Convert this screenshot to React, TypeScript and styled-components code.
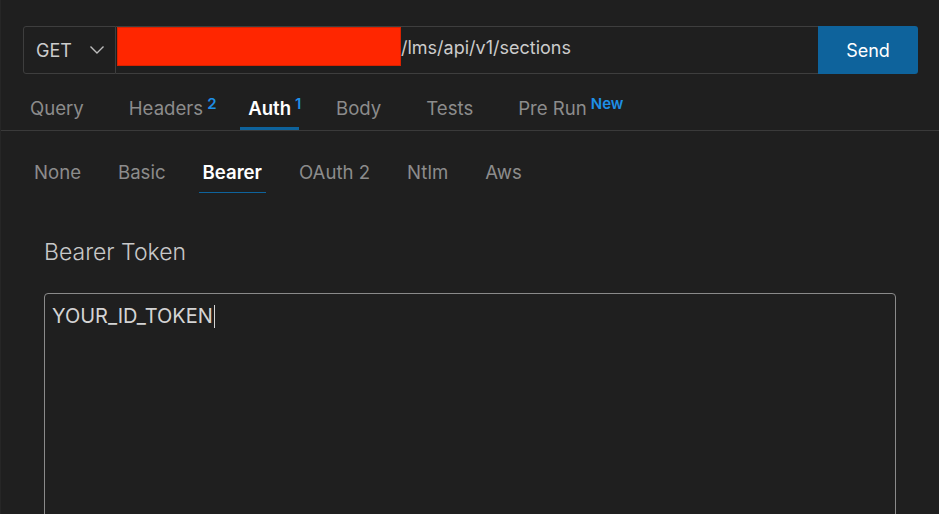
import React from "react";
import styled, { createGlobalStyle } from "styled-components";

const Global = createGlobalStyle`
  html, body { margin: 0; padding: 0; background: #1f1f1f; }
  body { font-family: Inter, "Noto Sans", "Liberation Sans", sans-serif; }
  * { box-sizing: border-box; }
`;

const Page = styled.div`
  width: 939px;
  height: 514px;
  overflow: hidden;
  background: #1f1f1f;
  border-left: 1px solid #262626;
  padding-top: 26px;
  color: #cccccc;
`;

const RequestBar = styled.div`
  display: flex;
  height: 48px;
  margin: 0 21px 0 22px;
`;

const MethodSelect = styled.div`
  width: 93px;
  display: flex;
  align-items: center;
  justify-content: space-between;
  padding: 0 10px 0 12px;
  border: 1px solid #3e3e3e;
  border-radius: 3px 0 0 3px;
  font-size: 18px;
  color: #cccccc;
`;

const UrlField = styled.div`
  flex: 1;
  display: flex;
  align-items: flex-start;
  border-top: 1px solid #3e3e3e;
  border-bottom: 1px solid #3e3e3e;
  padding: 0 0 0 1px;
`;

const Redaction = styled.div`
  width: 284px;
  height: 39px;
  background: #ff2600;
  border: 1px solid #d92200;
`;

const UrlText = styled.span`
  font-size: 18px;
  line-height: 42px;
  color: #cccccc;
`;

const SendButton = styled.button`
  width: 100px;
  border: none;
  border-radius: 0 3px 3px 0;
  background: #0e639c;
  color: #ffffff;
  font-family: inherit;
  font-size: 18px;
  padding: 0;
`;

const TabBar = styled.div`
  display: flex;
  align-items: flex-end;
  height: 57px;
  padding-left: 21px;
  border-bottom: 1px solid #3a3a3a;
`;

const Tab = styled.div<{ $active?: boolean }>`
  position: relative;
  padding: 0 8px;
  margin-right: 29px;
  height: 34px;
  font-size: 18.6px;
  line-height: 24px;
  font-weight: ${(p) => (p.$active ? 600 : 400)};
  color: ${(p) => (p.$active ? "#ffffff" : "#8c8c8c")};
  border-bottom: 3px solid ${(p) => (p.$active ? "#0e639c" : "transparent")};
`;

const Sup = styled.span`
  position: absolute;
  top: 0;
  left: calc(100% - 4px);
  font-size: 15px;
  line-height: 15px;
  font-weight: 600;
  color: #1e8fe6;
  white-space: nowrap;
`;

const SubTabs = styled.div`
  display: flex;
  padding: 31px 0 0 29px;
`;

const SubTab = styled.div<{ $active?: boolean }>`
  padding: 0 4px 9px;
  margin-right: 29px;
  font-size: 18.6px;
  line-height: 21px;
  font-weight: ${(p) => (p.$active ? 600 : 400)};
  color: ${(p) => (p.$active ? "#ffffff" : "#8c8c8c")};
  border-bottom: 1px solid ${(p) => (p.$active ? "#0e639c" : "transparent")};
`;

const Section = styled.div`
  padding: 45px 0 0 43px;
`;

const Label = styled.div`
  font-size: 23px;
  font-weight: 300;
  color: #c8c8c8;
  line-height: 28px;
`;

const TextArea = styled.div`
  margin-top: 27px;
  width: 852px;
  height: 260px;
  border: 1px solid #8a8a8a;
  border-radius: 4px;
  padding: 10px 7px;
  font-size: 20px;
  line-height: 24px;
  color: #d4d4d4;
`;

const Line = styled.div`
  display: flex;
  align-items: center;
  height: 24px;
`;

const Caret = styled.span`
  display: inline-block;
  width: 1px;
  height: 23px;
  background: #d4d4d4;
  margin-left: 1px;
`;

const Chevron = () => (
  <svg width="16" height="10" viewBox="0 0 16 10" fill="none">
    <path d="M1.5 1.5 L8 8 L14.5 1.5" stroke="#bdbdbd" strokeWidth="1.4" />
  </svg>
);

export default function App() {
  return (
    <>
      <Global />
      <Page>
        <RequestBar>
          <MethodSelect>
            <span>GET</span>
            <Chevron />
          </MethodSelect>
          <UrlField>
            <Redaction />
            <UrlText>/lms/api/v1/sections</UrlText>
          </UrlField>
          <SendButton>Send</SendButton>
        </RequestBar>
        <TabBar>
          <Tab>Query</Tab>
          <Tab>
            Headers<Sup>2</Sup>
          </Tab>
          <Tab $active>
            Auth<Sup>1</Sup>
          </Tab>
          <Tab>Body</Tab>
          <Tab>Tests</Tab>
          <Tab>
            Pre Run<Sup>New</Sup>
          </Tab>
        </TabBar>
        <SubTabs>
          <SubTab>None</SubTab>
          <SubTab>Basic</SubTab>
          <SubTab $active>Bearer</SubTab>
          <SubTab>OAuth 2</SubTab>
          <SubTab>Ntlm</SubTab>
          <SubTab>Aws</SubTab>
        </SubTabs>
        <Section>
          <Label>Bearer Token</Label>
          <TextArea>
            <Line>
              YOUR_ID_TOKEN
              <Caret />
            </Line>
          </TextArea>
        </Section>
      </Page>
    </>
  );
}
